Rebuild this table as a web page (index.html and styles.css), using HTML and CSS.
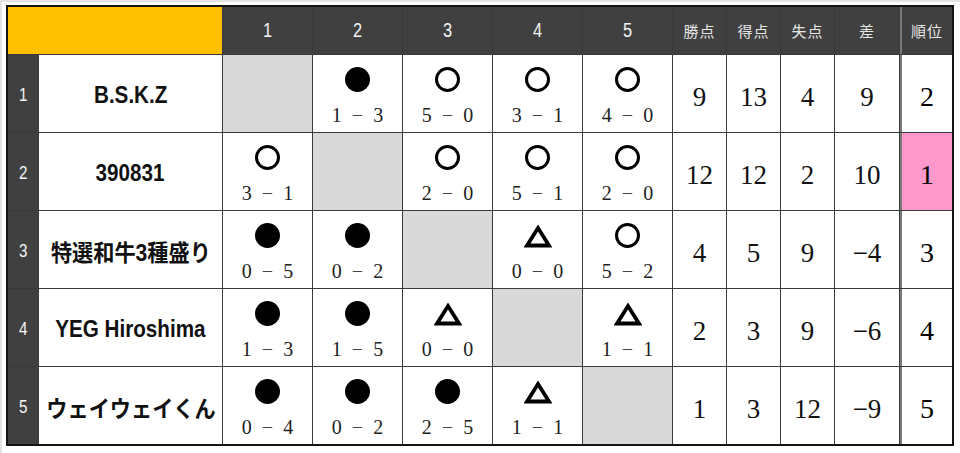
FILE: index.html
```html
<!DOCTYPE html>
<html lang="ja">
<head>
<meta charset="utf-8">
<title>順位表</title>
<link rel="stylesheet" href="styles.css">
</head>
<body>
<div class="frame">
  <div class="board">
    <div class="corner"></div>
    <div class="hd"><span>1</span></div>
    <div class="hd"><span>2</span></div>
    <div class="hd"><span>3</span></div>
    <div class="hd"><span>4</span></div>
    <div class="hd"><span>5</span></div>
    <div class="hd jp">勝点</div>
    <div class="hd jp">得点</div>
    <div class="hd jp">失点</div>
    <div class="hd jp">差</div>
    <div class="hd jp rk">順位</div>

    <!-- row 1 -->
    <div class="no"><span>1</span></div>
    <div class="name"><span>B.S.K.Z</span></div>
    <div class="m self"></div>
    <div class="m"><span class="sym lose"></span><span class="sc"><i>1</i><i class="d">−</i><i>3</i></span></div>
    <div class="m"><span class="sym win"></span><span class="sc"><i>5</i><i class="d">−</i><i>0</i></span></div>
    <div class="m"><span class="sym win"></span><span class="sc"><i>3</i><i class="d">−</i><i>1</i></span></div>
    <div class="m"><span class="sym win"></span><span class="sc"><i>4</i><i class="d">−</i><i>0</i></span></div>
    <div class="st">9</div><div class="st">13</div><div class="st">4</div><div class="st">9</div>
    <div class="st rk">2</div>

    <!-- row 2 -->
    <div class="no"><span>2</span></div>
    <div class="name"><span>390831</span></div>
    <div class="m"><span class="sym win"></span><span class="sc"><i>3</i><i class="d">−</i><i>1</i></span></div>
    <div class="m self"></div>
    <div class="m"><span class="sym win"></span><span class="sc"><i>2</i><i class="d">−</i><i>0</i></span></div>
    <div class="m"><span class="sym win"></span><span class="sc"><i>5</i><i class="d">−</i><i>1</i></span></div>
    <div class="m"><span class="sym win"></span><span class="sc"><i>2</i><i class="d">−</i><i>0</i></span></div>
    <div class="st">12</div><div class="st">12</div><div class="st">2</div><div class="st">10</div>
    <div class="st rk first">1</div>

    <!-- row 3 -->
    <div class="no"><span>3</span></div>
    <div class="name jpn"><span>特選和牛3種盛り</span></div>
    <div class="m"><span class="sym lose"></span><span class="sc"><i>0</i><i class="d">−</i><i>5</i></span></div>
    <div class="m"><span class="sym lose"></span><span class="sc"><i>0</i><i class="d">−</i><i>2</i></span></div>
    <div class="m self"></div>
    <div class="m"><span class="sym draw"><svg viewBox="0 0 28 25" width="28" height="25"><polygon points="14,5 25,22.5 3,22.5" fill="none" stroke="#000" stroke-width="3.8"/></svg></span><span class="sc"><i>0</i><i class="d">−</i><i>0</i></span></div>
    <div class="m"><span class="sym win"></span><span class="sc"><i>5</i><i class="d">−</i><i>2</i></span></div>
    <div class="st">4</div><div class="st">5</div><div class="st">9</div><div class="st">−4</div>
    <div class="st rk">3</div>

    <!-- row 4 -->
    <div class="no"><span>4</span></div>
    <div class="name"><span>YEG Hiroshima</span></div>
    <div class="m"><span class="sym lose"></span><span class="sc"><i>1</i><i class="d">−</i><i>3</i></span></div>
    <div class="m"><span class="sym lose"></span><span class="sc"><i>1</i><i class="d">−</i><i>5</i></span></div>
    <div class="m"><span class="sym draw"><svg viewBox="0 0 28 25" width="28" height="25"><polygon points="14,5 25,22.5 3,22.5" fill="none" stroke="#000" stroke-width="3.8"/></svg></span><span class="sc"><i>0</i><i class="d">−</i><i>0</i></span></div>
    <div class="m self"></div>
    <div class="m"><span class="sym draw"><svg viewBox="0 0 28 25" width="28" height="25"><polygon points="14,5 25,22.5 3,22.5" fill="none" stroke="#000" stroke-width="3.8"/></svg></span><span class="sc"><i>1</i><i class="d">−</i><i>1</i></span></div>
    <div class="st">2</div><div class="st">3</div><div class="st">9</div><div class="st">−6</div>
    <div class="st rk">4</div>

    <!-- row 5 -->
    <div class="no"><span>5</span></div>
    <div class="name jpn"><span>ウェイウェイくん</span></div>
    <div class="m"><span class="sym lose"></span><span class="sc"><i>0</i><i class="d">−</i><i>4</i></span></div>
    <div class="m"><span class="sym lose"></span><span class="sc"><i>0</i><i class="d">−</i><i>2</i></span></div>
    <div class="m"><span class="sym lose"></span><span class="sc"><i>2</i><i class="d">−</i><i>5</i></span></div>
    <div class="m"><span class="sym draw"><svg viewBox="0 0 28 25" width="28" height="25"><polygon points="14,5 25,22.5 3,22.5" fill="none" stroke="#000" stroke-width="3.8"/></svg></span><span class="sc"><i>1</i><i class="d">−</i><i>1</i></span></div>
    <div class="m self"></div>
    <div class="st">1</div><div class="st">3</div><div class="st">12</div><div class="st">−9</div>
    <div class="st rk">5</div>
  </div>
</div>
</body>
</html>
```

FILE: styles.css
```css
html, body {
  margin: 0;
  padding: 0;
  background: #ffffff;
}

.frame {
  width: 960px;
  height: 453px;
  box-sizing: border-box;
  border-top: 2px solid #e4e4e4;
  border-left: 2px solid #e4e4e4;
  padding: 3px 0 0 4px;
}

.board {
  display: grid;
  grid-template-columns: 30px 183px repeat(5, 89px) 53px 53px 53px 64px 52px;
  grid-template-rows: 47px repeat(5, 77px);
  gap: 1px;
  width: max-content;
  background: #3a3a3a;
  border: 2px solid #141414;
}

.corner {
  grid-column: 1 / span 2;
  background: #ffc000;
}

.hd {
  background: #404040;
  color: #f4f4f4;
  display: flex;
  align-items: center;
  justify-content: center;
  font-family: "Liberation Sans", Arial, sans-serif;
  font-size: 20px;
}

.hd span {
  display: inline-block;
  transform: scaleX(0.82);
}

.hd.jp {
  font-family: "Noto Sans CJK JP", sans-serif;
  font-size: 15px;
  color: #e6e6e6;
  letter-spacing: 1px;
}

.hd.rk {
  border-left: 2px solid #7a7a7a;
}

.no {
  background: #404040;
  color: #f6f6f6;
  display: flex;
  align-items: center;
  justify-content: center;
  padding-top: 2px;
  font-family: "Liberation Sans", Arial, sans-serif;
  font-size: 19px;
}

.no span {
  display: inline-block;
  transform: scaleX(0.8);
}

.name {
  background: #ffffff;
  display: flex;
  align-items: center;
  justify-content: center;
  padding-top: 3px;
  font-family: "Liberation Sans", "Noto Sans CJK JP", sans-serif;
  font-weight: bold;
  font-size: 24px;
  color: #111;
  white-space: nowrap;
}

.name span {
  display: inline-block;
  transform: scaleX(0.86);
}

.name.jpn {
  font-size: 23px;
}

.name.jpn span {
  transform: scaleX(0.92);
}

.m {
  background: #ffffff;
  display: flex;
  flex-direction: column;
  align-items: center;
  padding-top: 12px;
  box-sizing: border-box;
}

.m.self {
  background: #d9d9d9;
}

.sym {
  display: block;
  width: 25px;
  height: 25px;
  box-sizing: border-box;
  border-radius: 50%;
}

.sym.lose {
  background: #000;
}

.sym.win {
  border: 3px solid #000;
}

.sym.draw {
  border-radius: 0;
  width: 28px;
}

.sym.draw svg {
  display: block;
}

.sc {
  display: flex;
  gap: 10px;
  margin-top: 13px;
  font-family: "Liberation Serif", "Times New Roman", serif;
  font-size: 20px;
  line-height: 20px;
  color: #222;
}

.sc i {
  font-style: normal;
}

.sc i.d {
  color: #444;
}

.st {
  background: #ffffff;
  display: flex;
  align-items: center;
  justify-content: center;
  padding-top: 6px;
  font-family: "Liberation Serif", "Times New Roman", serif;
  font-size: 27px;
  line-height: 26px;
  color: #111;
}

.st.rk {
  border-left: 2px solid #7a7a7a;
  font-size: 28px;
  color: #000;
}

.st.first {
  background: #ff99cc;
}
```
